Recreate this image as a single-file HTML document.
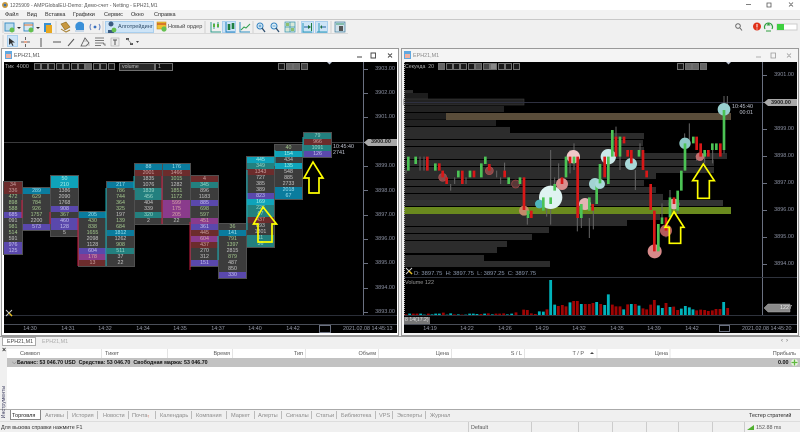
<!DOCTYPE html>
<html><head><meta charset="utf-8"><style>
html,body{margin:0;padding:0;width:800px;height:432px;overflow:hidden;background:#f0f0f0}
body{font-family:"Liberation Sans",sans-serif;font-size:5.5px;color:#2a2a2a;position:relative;filter:blur(.3px)}
.a{position:absolute;white-space:nowrap}
.t{position:absolute;white-space:nowrap;line-height:8px}
.c{position:absolute;width:27px;background:#3c3c3c;outline:1px solid #505050}
.c i{display:block;height:6px;font:normal 5.3px/6px "Liberation Sans",sans-serif;text-align:center;color:#c6c6c6}
.c i.g{color:#a5c98f}
.c i.b{background:#0a7c9e;color:#9fe0ee}
.c i.k{background:#0fa3ba;color:#a8f0e8}
.c i.p{background:#5a48ac;color:#c6c2ec}
.c i.r{background:#6c2c2c;color:#c9a0a0}
.c i.m{background:#8a3b8c;color:#d8a8a8}
.c i.e{background:#23807f;color:#9fd8c8}
.px{color:#8d93a5;font-size:5.5px;width:30px;text-align:right}
.tm{color:#9a9fae;font-size:5.4px;transform:translateX(-50%)}
.bt{position:absolute;width:5px;height:5px;border:1px solid #707070;background:#1a1a1a;top:63px}
.hd{top:350px;color:#555;font-size:5.5px}
.tb{top:412px;color:#8a8a8a;font-size:5.6px}
.hl{position:absolute;background:#cde4f7;border:1px solid #a9cfee;box-sizing:border-box}
</style></head><body>

<!-- title bar -->
<div class="a" style="left:0;top:0;width:800px;height:10px;background:#fff"></div>
<svg class="a" style="left:1px;top:0" width="8" height="10"><circle cx="4" cy="5" r="3" fill="#c89a40"/><circle cx="4" cy="5" r="1.3" fill="#3a70b0"/></svg>
<div class="t" style="left:10px;top:2px;color:#555;font-size:5.6px;transform:scaleX(.9);transform-origin:left">1225909 - AMPGlobalEU-Demo: Демо-счет - Netting - EPH21,M1</div>
<svg class="a" style="left:740px;top:0" width="60" height="10" fill="none" stroke="#555" stroke-width=".8"><path d="M6 4.5h5M27 3h4v4h-4zM49 2.5l4 4M53 2.5l-4 4"/></svg>

<!-- menu -->
<div class="a" style="left:0;top:10px;width:800px;height:9px;background:#f2f2f2"></div>
<div class="t" style="left:5px;top:11px">Файл</div><div class="t" style="left:27px;top:11px">Вид</div><div class="t" style="left:45px;top:11px">Вставка</div><div class="t" style="left:73px;top:11px">Графики</div><div class="t" style="left:104px;top:11px">Сервис</div><div class="t" style="left:131px;top:11px">Окно</div><div class="t" style="left:154px;top:11px">Справка</div>

<!-- toolbars -->
<div class="a" style="left:0;top:19px;width:800px;height:1px;background:#c8c8c8"></div>
<div class="a" style="left:0;top:20px;width:800px;height:28px;background:#f0f0f0"></div>
<div class="a" style="left:4px;top:33px;width:344px;height:1px;background:#d8d8d8"></div>
<div class="hl" style="left:105px;top:21px;width:49px;height:12px"></div>
<div class="hl" style="left:222px;top:21px;width:14px;height:12px"></div>
<div class="hl" style="left:301px;top:21px;width:13px;height:12px"></div>
<div class="hl" style="left:315px;top:21px;width:13px;height:12px"></div>
<div class="hl" style="left:7px;top:35px;width:11px;height:12px"></div>
<svg class="a" style="left:0;top:18px" width="360" height="32" fill="none">
<path d="M3 3v12M3 17v12M56 3v12M103 3v12M205 3v12M253 3v12M298 3v12M331 3v12" stroke="#d0d0d0"/>
<rect x="5" y="5" width="9" height="8" fill="#bcdcee" stroke="#3f8fc4"/><circle cx="12" cy="12" r="2.5" fill="#66c050"/><path d="M17 9h4l-2 2z" fill="#333"/>
<rect x="24" y="5" width="9" height="8" fill="#d8e8f2" stroke="#3f8fc4"/><path d="M24 7h9" stroke="#e07030"/><circle cx="31" cy="12" r="2.5" fill="#66c050"/><path d="M36 9h4l-2 2z" fill="#333"/>
<rect x="44" y="5" width="7" height="9" fill="#3a90d0"/><rect x="46" y="7" width="6" height="8" fill="#e8a820"/>
<path d="M61 6l5-2 4 5-5 3z" fill="#c89840" stroke="#8a6a20" stroke-width=".6"/><path d="M61 11l5 3 4-2" stroke="#a88030"/>
<path d="M76 11a4 4 0 0 1 8-5v7h-8z" fill="#3a90d8"/><path d="M75 13h9" stroke="#c8d8e8" stroke-width="2"/>
<circle cx="95" cy="9" r="1.4" fill="#3a70c0"/><path d="M91 6q-2 3 0 6M99 6q2 3 0 6" stroke="#6080c0"/>
<circle cx="111" cy="6" r="2.5" fill="#3a5a80"/><path d="M108 12h6v3h-6z" fill="#3a5a80"/><circle cx="114" cy="12" r="2.4" fill="#66c050"/>
<rect x="157" y="4" width="9" height="7" fill="#f0c030" stroke="#c09020" stroke-width=".6"/><path d="M157 6h9" stroke="#c03020"/><circle cx="164" cy="11" r="2.6" fill="#66c050"/>
<path d="M211 4v10h10M214 5v6M218 4v6" stroke="#2f9d8c"/><path d="M214 6v3M218 6v3" stroke="#55b040" stroke-width="2"/>
<path d="M226 4v10h9" stroke="#2080c0"/><path d="M229 6v6M233 5v6" stroke="#208040" stroke-width="2.6"/>
<path d="M240 4v10h10" stroke="#3090c0"/><path d="M241 12l3-3 2 1 4-4" stroke="#30a050"/>
<circle cx="260" cy="8" r="3" stroke="#3080c0" fill="#e0f0f8"/><path d="M262 10l3 4" stroke="#305070" stroke-width="1.3"/><path d="M258.5 8h3M260 6.500v3" stroke="#3080c0" stroke-width=".7"/>
<circle cx="274" cy="8" r="3" stroke="#3080c0" fill="#e0f0f8"/><path d="M276 10l3 4" stroke="#305070" stroke-width="1.3"/><path d="M272.500 8h3" stroke="#3080c0" stroke-width=".7"/>
<rect x="285" y="4" width="10" height="10" fill="#d8e8d8" stroke="#3090b0" stroke-width=".7"/><path d="M290 4v10M285 9h10" stroke="#3090b0" stroke-width=".7"/><rect x="286" y="5" width="3" height="3" fill="#8cc070"/><rect x="291" y="10" width="3" height="3" fill="#8cc070"/>
<path d="M303 5v9h9" stroke="#2c9ab8"/><path d="M304 9h5" stroke="#2060a0"/><path d="M308 7l3 2-3 2z" fill="#207040"/><path d="M311.500 5v8" stroke="#208040"/>
<path d="M319 5v9M317 14h10" stroke="#2c9ab8"/><path d="M321 9h5" stroke="#2060a0"/><path d="M322 7l-2 2 2 2z" fill="#207040"/>
<rect x="335" y="4" width="10" height="10" fill="#cfe0ea" stroke="#3a7a9a" stroke-width=".7"/><rect x="339" y="8" width="4" height="5" fill="#555"/><path d="M336 6h8" stroke="#3a9a70"/>
<path d="M9 20l0 7 2-2 1.500 3 1-.5-1.500-3h3z" fill="#333"/>
<path d="M21 24h9M25.500 19v3M25.500 26v3" stroke="#666"/><path d="M24 24h3" stroke="#e06030"/>
<path d="M41 20v9" stroke="#555"/><path d="M53 24h8" stroke="#555"/><path d="M68 28l6-7" stroke="#555"/>
<path d="M81 28l4-8 4 5-3 3z" stroke="#555" stroke-width=".8"/><path d="M84 23h4M86 27h4" stroke="#888" stroke-width=".6"/>
<path d="M95 20h9M95 22.500h9M95 25h9M95 27.500h6" stroke="#555" stroke-width=".8"/><path d="M103 26h2v2" stroke="#555" stroke-width=".7"/>
<rect x="111" y="20" width="8" height="8" fill="#ececec" stroke="#aaa" stroke-width=".6"/><path d="M113 22h4M115 22v5" stroke="#555"/>
<path d="M126 20h3v2h-3zM130 25h3v2h-3z" fill="#555"/><path d="M127 21l5 5" stroke="#888" stroke-width=".7"/><path d="M136 23h3l-1.500 2z" fill="#444"/>
</svg>
<div class="t" style="left:118px;top:23px;color:#2d4a66;font-size:5.5px">Алготрейдинг</div>
<div class="t" style="left:168px;top:23px;color:#444;font-size:5.6px">Новый ордер</div>
<svg class="a" style="left:730px;top:20px" width="70" height="14" fill="none">
<circle cx="8" cy="6" r="2.300" stroke="#666"/><path d="M10 8l2 2.500" stroke="#666"/>
<circle cx="27" cy="6.500" r="4" fill="#e03018"/><path d="M27 4v3.500M27 8.500v1" stroke="#fff"/>
<path d="M35 9a4 4 0 1 1 7 0" stroke="#30a040" stroke-width="1.200"/><path d="M38.500 3l2 2.500h-4z" fill="#30a040"/><path d="M36 11h5" stroke="#30a040"/>
<rect x="47" y="4" width="20" height="6" fill="#fff" stroke="#ccc"/><rect x="47" y="4" width="7" height="6" fill="#3ed040"/>
</svg>

<!-- window frames -->
<div class="a" style="left:0;top:48px;width:800px;height:288px;background:#f0f0f0"></div>
<div class="a" style="left:1px;top:48px;width:398px;height:288px;background:#fff;border:1px solid #999;box-sizing:border-box"></div>
<div class="a" style="left:401px;top:48px;width:398px;height:288px;background:#f4f4f4;border:1px solid #999;box-sizing:border-box"></div>
<svg class="a" style="left:5px;top:51px" width="8" height="9"><rect width="7" height="8" y="0" fill="#60a8e0"/><rect x="1" y="3" width="5" height="4" fill="#f0b0a0"/></svg>
<div class="t" style="left:14px;top:52px;color:#555;font-size:5.400px">EPH21,M1</div>
<svg class="a" style="left:404px;top:51px" width="8" height="9"><rect width="7" height="8" y="0" fill="#60a8e0"/><rect x="1" y="3" width="5" height="4" fill="#f0b0a0"/></svg>
<div class="t" style="left:413px;top:52px;color:#888;font-size:5.400px">EPH21,M1</div>
<svg class="a" style="left:350px;top:50px" width="50" height="11" fill="none" stroke="#444" stroke-width=".9"><path d="M7 7h5M21 3h4.500v5H21zM38 3.500l4 4M42 3.500l-4 4"/></svg>
<svg class="a" style="left:750px;top:50px" width="50" height="11" fill="none" stroke="#999" stroke-width=".8"><path d="M6 7h5M21 3h4.500v5H21zM37 3.500l4 4M41 3.500l-4 4"/></svg>

<!-- left chart -->
<div class="a" style="left:4px;top:62px;width:393px;height:271px;background:#000"></div>
<div class="a" style="left:363px;top:62px;width:1px;height:253px;background:#6a7080"></div>
<div class="a" style="left:4px;top:142px;width:360px;height:1px;background:#3a3a3c"></div>
<div class="a" style="left:4px;top:315px;width:393px;height:1px;background:#2a2e38"></div>
<div class="a" style="left:4px;top:324px;width:393px;height:1px;background:#4a4e58"></div>
<div class="a" style="left:319px;top:325px;width:10px;height:6px;border:1px solid #6a7080"></div>
<svg class="a" style="left:363px;top:62px" width="8" height="254" stroke="#6a7080" fill="none"><path d="M0 7.500h5M0 31.500h5M0 55.500h5M0 80.500h5M0 104.500h5M0 128.500h5M0 153.500h5M0 177.500h5M0 201.500h5M0 226.500h5M0 250.500h5" /></svg>
<div class="t px" style="left:365px;top:65px">3903.00</div><div class="t px" style="left:365px;top:89px">3902.00</div><div class="t px" style="left:365px;top:113px">3901.00</div><div class="t px" style="left:365px;top:162px">3899.00</div><div class="t px" style="left:365px;top:187px">3898.00</div><div class="t px" style="left:365px;top:211px">3897.00</div><div class="t px" style="left:365px;top:235px">3896.00</div><div class="t px" style="left:365px;top:259px">3895.00</div><div class="t px" style="left:365px;top:284px">3894.00</div><div class="t px" style="left:365px;top:308px">3893.00</div>
<svg class="a" style="left:364px;top:138px" width="34" height="9"><path d="M0 4.500L4 1h29v7H4z" fill="#a9a9a9"/></svg>
<div class="t" style="left:371px;top:138px;color:#222;font-size:5.500px;font-weight:bold">3900.00</div>

<div class="t" style="left:5px;top:63px;color:#b0b0b0;font-size:5.500px">Тик&nbsp; 4000</div>
<span class="bt" style="left:34px"></span><span class="bt" style="left:41px"></span><span class="bt" style="left:48px"></span><span class="bt" style="left:56px"></span><span class="bt" style="left:63px"></span><span class="bt" style="left:71px"></span><span class="bt" style="left:78px"></span><span class="bt" style="left:85px;background:#666"></span><span class="bt" style="left:93px"></span><span class="bt" style="left:100px"></span><span class="bt" style="left:108px"></span>
<div class="a" style="left:119px;top:63px;width:34px;height:6px;background:#2a2a2a;border:1px solid #707070;color:#bbb;font-size:5.200px;line-height:6px;text-indent:2px">volume</div>
<div class="a" style="left:155px;top:63px;width:16px;height:6px;background:#111;border:1px solid #707070;color:#bbb;font-size:5.200px;line-height:6px;text-indent:2px">1</div>
<span class="bt" style="left:278px"></span><span class="bt" style="left:286px;background:#666"></span><span class="bt" style="left:293px;background:#666"></span><span class="bt" style="left:301px;background:#444"></span>
<svg class="a" style="left:326px;top:61px" width="8" height="4"><path d="M1 1h5L3.500 3.500z" fill="#c0c8d8"/></svg>

<div class="c" style="left:4px;top:182px;width:18px"><i class="r">34</i><i class="r">336</i><i class="g">472</i><i class="g">898</i><i class="g">588</i><i class="p">685</i><i>091</i><i class="g">981</i><i class="g">514</i><i>591</i><i class="p">976</i><i class="p">125</i></div>
<div class="c" style="left:23px;top:188px"><i class="b">289</i><i class="g">629</i><i class="g">784</i><i class="g">926</i><i class="g">1757</i><i>2200</i><i class="p">573</i></div>
<div class="c" style="left:51px;top:176px"><i class="k">50</i><i class="k">210</i><i>1386</i><i>2090</i><i>1768</i><i class="p">908</i><i class="g">367</i><i class="p">460</i><i class="p">128</i><i>5</i></div>
<div class="c" style="left:79px;top:212px"><i class="b">205</i><i class="g">430</i><i class="g">838</i><i class="g">1655</i><i>2098</i><i>1128</i><i class="p">604</i><i class="m">178</i><i class="r">13</i></div>
<div class="c" style="left:107px;top:182px"><i class="b">217</i><i class="g">786</i><i class="g">744</i><i class="g">364</i><i class="g">325</i><i>197</i><i class="g">139</i><i class="g">684</i><i class="b">1812</i><i>1262</i><i class="g">908</i><i class="e">511</i><i>37</i><i>22</i></div>
<div class="c" style="left:135px;top:164px"><i class="b">88</i><i class="r">2001</i><i>1835</i><i>1076</i><i class="e">1839</i><i class="e">456</i><i>404</i><i>339</i><i class="e">320</i><i>2</i></div>
<div class="c" style="left:163px;top:164px"><i class="b">176</i><i class="r">1466</i><i class="g">1015</i><i>1282</i><i class="g">1851</i><i class="g">1172</i><i class="m">599</i><i class="m">175</i><i class="m">205</i><i>22</i></div>
<div class="c" style="left:191px;top:176px"><i class="r">4</i><i class="e">345</i><i>896</i><i>1183</i><i class="p">885</i><i class="g">698</i><i class="g">597</i><i class="m">451</i><i class="p">361</i><i class="r">445</i><i class="m">604</i><i class="r">437</i><i>270</i><i>312</i><i class="p">151</i></div>
<div class="c" style="left:219px;top:224px"><i class="g">36</i><i class="b">141</i><i class="g">791</i><i class="g">1397</i><i>2815</i><i class="g">879</i><i>487</i><i>850</i><i class="p">330</i></div>
<div class="c" style="left:247px;top:157px"><i class="k">445</i><i class="e">349</i><i class="r">1343</i><i>727</i><i>385</i><i>389</i><i class="p">823</i><i class="k">169</i><i class="e">226</i><i class="e">67</i><i class="r">437</i><i>893</i><i>1301</i><i class="e">11</i><i class="e">36</i></div>
<div class="c" style="left:275px;top:145px"><i class="g">40</i><i class="k">154</i><i>434</i><i class="k">135</i><i>548</i><i>885</i><i>2733</i><i class="b">2018</i><i class="b">67</i></div>
<div class="c" style="left:304px;top:133px"><i class="e">79</i><i class="r">966</i><i class="e">1091</i><i class="p">126</i></div>
<svg class="a" style="left:0;top:0" width="400" height="340" fill="none">
<path d="M22 200v18M50 212v12M78 218v48M162 176v48M190 222v48" stroke="#d01840"/>
<path d="M106 188v78M134 176v14M218 236v24M247 170v60M275 150v16M303 137v20" stroke="#10b0b8"/>
<path d="M263 207L253.500 224H258V242H272V224H276.500ZM313 162L304 178H309V193H319V178H323Z" stroke="#ffff00" stroke-width="1.700"/>
<path d="M6 310l6 6M12 310l-6 6" stroke="#ccc"/><path d="M9 313l3 3" stroke="#e8c020" stroke-width="1.400"/>
</svg>
<div class="t" style="left:333px;top:144px;color:#c0c4d0;font-size:5.400px;line-height:6px">10:45:40<br>2741</div>

<div class="t tm" style="left:30px;top:325px">14:30</div><div class="t tm" style="left:68px;top:325px">14:31</div><div class="t tm" style="left:105px;top:325px">14:32</div><div class="t tm" style="left:143px;top:325px">14:34</div><div class="t tm" style="left:180px;top:325px">14:35</div><div class="t tm" style="left:218px;top:325px">14:37</div><div class="t tm" style="left:255px;top:325px">14:40</div><div class="t tm" style="left:293px;top:325px">14:42</div>
<div class="t" style="left:343px;top:325px;color:#9a9fae;font-size:5.400px">2021.02.08 14:45:13</div>

<!-- right chart -->
<div class="a" style="left:404px;top:62px;width:393px;height:271px;background:#000"></div>
<svg class="a" style="left:400px;top:60px" width="400" height="280" fill="none" shape-rendering="auto">
<g transform="translate(0 -60)">
<g fill="#2c2c2c">
<rect x="4" y="90" width="9" height="3"/><rect x="4" y="93" width="24" height="6" fill="#1d1d1d"/>
<rect x="4" y="99" width="120" height="6" fill="#222" stroke="#3c3c3c" stroke-width=".6"/><rect x="4" y="106" width="100" height="6" fill="#222"/>
<rect x="4" y="113" width="42" height="6.500" fill="#1f1f1f"/><rect x="46" y="113" width="285" height="7" fill="#5a4d3a"/>
<rect x="4" y="120" width="92" height="6" fill="#222"/><rect x="4" y="127" width="106" height="6"/>
<rect x="4" y="133" width="240" height="6"/><rect x="4" y="140" width="239" height="6"/><rect x="4" y="147" width="240" height="6"/>
<rect x="4" y="153" width="323" height="6"/><rect x="4" y="160" width="310" height="6"/><rect x="4" y="167" width="310" height="6"/><rect x="4" y="173" width="252" height="6"/><rect x="4" y="180" width="240" height="6"/><rect x="4" y="187" width="252" height="6"/><rect x="4" y="194" width="259" height="6"/><rect x="4" y="200" width="319" height="6" fill="#333"/>
<rect x="4" y="207" width="327" height="7" fill="#6a8a1e"/>
<rect x="4" y="214" width="256" height="6"/><rect x="4" y="220" width="223" height="6"/><rect x="4" y="227" width="145" height="6"/><rect x="4" y="234" width="128" height="6"/><rect x="4" y="241" width="103" height="6"/><rect x="4" y="247" width="93" height="6"/><rect x="4" y="255" width="80" height="6"/><rect x="4" y="261" width="146" height="6"/>
</g>
<path d="M4 102.500h358" stroke="#2e3040"/>
<path d="M362.500 62v253" stroke="#6a7080"/>
<path d="M362 75.500h5M362 102.500h5M362 129.500h5M362 156.500h5M362 183.500h5M362 210.500h5M362 237.500h5M362 264.500h5" stroke="#6a7080"/>
<path d="M4.500 62v253" stroke="#aaa" stroke-dasharray="1 1"/>
<path d="M4 277.500h393M4 315.500h393" stroke="#2e323c"/><path d="M4 324.500h393" stroke="#4a4e58"/>
<path d="M362.500 278v37" stroke="#6a7080"/>
<g transform="translate(0 90) scale(.33333)">
<path d="M60 200v42M72 200v42M18 240v10M164 262v20M152 282v20M198 262v20M290 242v20M302 262v20M452 180v224M476 220v80M382 384v20M440 330v50M464 262v80M522 160v80M498 200v60M510 180v70M532 384v40M568 384v60M580 362v56M544 384v30" stroke="#666" stroke-width="3"/>
<path d="M268 222v10M314 218v24" stroke="#777" stroke-width="2.500"/>
</g>
<g transform="translate(200 90) scale(.33333)">
<path d="M48 110v30M60 200v40M106 240v60M120 160v20M175 484v10M186 340v42M198 422v20M210 300v22M233 362v10M268 100v60M254 130v30M290 200v12M314 200v20M338 180v40M372 18v42M372 180v10M382 18v30" stroke="#666" stroke-width="3"/>
</g>
<!-- bubbles -->
<g transform="translate(0 90) scale(.33333)">
<circle cx="452" cy="322" r="35" fill="#dff3f1"/>
<circle cx="520" cy="200" r="20" fill="#f0c8c8"/>
<circle cx="486" cy="282" r="18" fill="#d88e8e"/>
<circle cx="555" cy="342" r="18" fill="#e2b4b4"/>
<circle cx="372" cy="362" r="15" fill="#c58a6a"/>
<circle cx="418" cy="342" r="13" fill="#4fb5be"/>
<circle cx="585" cy="282" r="18" fill="#a2d2d2"/>
<circle cx="128" cy="262" r="12" fill="#8a4a4a" stroke="#b05050" stroke-width="2"/>
<circle cx="268" cy="242" r="12" fill="#8a4a4a" stroke="#b05050" stroke-width="2"/>
<circle cx="347" cy="282" r="12" fill="#5a3838" stroke="#a04848" stroke-width="2"/>
<path d="M25 200v42M47 200v22M106 220v22M175 242v20M210 242v20M244 220v42M256 200v22M326 262v20M360 262v20M384 362v22M430 322v40M452 322v20M464 282v20M498 200v62M522 200v20M544 342v42M568 322v40M590 282v60" stroke="#4cc355" stroke-width="8"/>
<path d="M82 200v42M118 220v22M128 242v20M140 262v20M187 242v40M222 242v20M268 222v20M314 242v20M372 262v98M394 362v22M486 262v20M510 200v20M533 200v184M578 342v20" stroke="#d81818" stroke-width="8"/>
</g>
<g transform="translate(200 90) scale(.33333)">
<circle cx="25" cy="200" r="23" fill="#cbe9e9"/>
<circle cx="93" cy="222" r="18" fill="#a9d9d9"/>
<circle cx="0" cy="282" r="15" fill="#a9d9d9"/>
<circle cx="164" cy="484" r="21" fill="#d88a8a"/>
<circle cx="198" cy="422" r="18" fill="#b45c5c"/>
<circle cx="222" cy="342" r="16" fill="#e0b8b8"/>
<circle cx="255" cy="160" r="17" fill="#8fc8c8"/>
<circle cx="300" cy="200" r="13" fill="#c07070"/>
<circle cx="372" cy="58" r="19" fill="#98d0d0"/>
<path d="M0 222v58M25 200v82M37 120v80M60 140v60M117 180v20M175 402v82M186 382v20M210 322v60M233 302v60M244 242v60M255 160v82M280 140v20M314 180v20M337 160v20M349 160v20M372 60v120" stroke="#4cc355" stroke-width="8"/>
<path d="M14 200v62M48 140v60M72 140v20M83 180v20M94 180v40M129 180v60M140 242v20M152 282v78M163 362v122M198 382v40M222 322v20M290 140v40M302 160v40M325 180v20M361 160v40" stroke="#d81818" stroke-width="8"/>
<path d="M222 365L195 412H208V460H242V412H252ZM310 222L278 272H293V325H328V272H343Z" stroke="#ffff00" stroke-width="5"/>
</g>
<!-- volume -->
<g transform="translate(0 265) scale(.33333)" stroke-width="8.500">
<path stroke="#00b3bb" d="M29 146V150M62 146V150M73 149V150M96 148V150M107 146V150M118 146V150M141 149V150M152 145V150M175 148V150M197 149V150M209 146V150M220 146V150M231 147V150M254 146V150M277 148V150M322 148V150M335 146V150M418 139V150M430 140V150M452 45V150M464 119V150M510 112V150M544 117V150M590 111V150M614 120V150M625 88V150M671 133V150M694 117V150M717 122V150M775 121V150M787 129V150M810 126V150M844 131V150M856 123V150M868 127V150M879 133V150M971 111V150"/>
<path stroke="#a00404" d="M18 148V150M40 146V150M51 146V150M85 146V150M130 143V150M163 148V150M186 149V150M243 147V150M265 145V150M288 146V150M299 146V150M311 145V150M348 142V150M371 134V150M382 135V150M394 145V150M406 147V150M441 133V150M475 123V150M487 120V150M498 124V150M521 108V150M532 108V150M556 117V150M568 117V150M579 114V150M602 117V150M637 119V150M648 124V150M660 124V150M683 118V150M706 117V150M729 130V150M740 133V150M752 119V150M763 105V150M798 114V150M821 125V150M833 135V150M890 136V150M902 134V150M914 135V150M925 138V150M937 136V150M948 132V150M960 132V150M983 129V150"/>
</g>
<path d="M364 102.500L368 99h29v7h-29z" fill="#a9a9a9"/>
<path d="M364 308l4-4h22v8h-22z" fill="#8a8a8a" stroke="#aaa" stroke-width=".5"/>
<path d="M6 268l6 6M12 268l-6 6" stroke="#ccc"/><path d="M9 271l3 3" stroke="#e8c020" stroke-width="1.400"/>
<rect x="319.500" y="325.500" width="10" height="6" stroke="#6a7080"/>
</g>
</svg>
<div class="t" style="left:771px;top:99px;color:#222;font-size:5.500px;font-weight:bold">3900.00</div>
<div class="t" style="left:780px;top:304px;color:#eee;font-size:5.400px">1227</div>
<div class="t px" style="left:764px;top:71px">3901.00</div><div class="t px" style="left:764px;top:125px">3899.00</div><div class="t px" style="left:764px;top:152px">3898.00</div><div class="t px" style="left:764px;top:179px">3897.00</div><div class="t px" style="left:764px;top:206px">3896.00</div><div class="t px" style="left:764px;top:233px">3895.00</div><div class="t px" style="left:764px;top:260px">3894.00</div>
<div class="t" style="left:732px;top:104px;color:#c0c4d0;font-size:5.400px;line-height:6px;text-align:right">10:45:40<br>00:01</div>
<div class="t" style="left:405px;top:63px;color:#b0b0b0;font-size:5.200px">Секунда&nbsp; 20</div>
<span class="bt" style="left:438px;background:#666"></span><span class="bt" style="left:446px"></span><span class="bt" style="left:453px"></span><span class="bt" style="left:460px"></span><span class="bt" style="left:468px"></span><span class="bt" style="left:475px;background:#555"></span><span class="bt" style="left:483px;background:#444"></span><span class="bt" style="left:490px;background:#888"></span><span class="bt" style="left:498px"></span><span class="bt" style="left:505px"></span><span class="bt" style="left:513px"></span>
<span class="bt" style="left:677px"></span><span class="bt" style="left:685px;background:#666"></span><span class="bt" style="left:692px;background:#666"></span><span class="bt" style="left:700px;background:#666"></span>
<svg class="a" style="left:725px;top:61px" width="8" height="4"><path d="M1 1h5L3.500 3.500z" fill="#c0c8d8"/></svg>
<div class="t" style="left:414px;top:270px;color:#8d9ab0;font-size:5.800px">D: 3897.75&nbsp; H: 3897.75&nbsp; L: 3897.25&nbsp; C: 3897.75</div>
<div class="t" style="left:405px;top:279px;color:#9a9a9a;font-size:5.500px">Volume 122</div>
<div class="a" style="left:404px;top:317px;width:26px;height:7px;background:#777;color:#ddd;font-size:5.200px;line-height:7px;text-indent:1px">8 14(17.2)</div>
<div class="t tm" style="left:430px;top:325px">14:19</div><div class="t tm" style="left:467px;top:325px">14:22</div><div class="t tm" style="left:505px;top:325px">14:26</div><div class="t tm" style="left:542px;top:325px">14:29</div><div class="t tm" style="left:579px;top:325px">14:32</div><div class="t tm" style="left:617px;top:325px">14:35</div><div class="t tm" style="left:654px;top:325px">14:39</div><div class="t tm" style="left:692px;top:325px">14:42</div>
<div class="t" style="left:742px;top:325px;color:#9a9fae;font-size:5.400px">2021.02.08 14:45:20</div>

<!-- bottom panel -->
<div class="a" style="left:0;top:336px;width:800px;height:96px;background:#f0f0f0;border-top:1px solid #999;box-sizing:border-box"></div>
<div class="a" style="left:2px;top:337px;width:34px;height:9px;background:#fff;border:1px solid #aaa;box-sizing:border-box"></div>
<div class="t" style="left:7px;top:338px;color:#444;font-size:5.400px">EPH21,M1</div>
<div class="t" style="left:42px;top:338px;color:#aaa;font-size:5.400px">EPH21,M1</div>
<div class="t" style="left:781px;top:337px;color:#666;font-size:6px;letter-spacing:3px">‹›</div>
<div class="a" style="left:7px;top:349px;width:793px;height:60px;background:#fff"></div>
<div class="a" style="left:7px;top:358px;width:793px;height:9px;background:#c2c2c2"></div>
<div class="t" style="left:2px;top:347px;color:#333;font-size:7px;font-weight:bold">×</div>
<div class="t hd" style="left:20px">Символ</div><div class="t hd" style="left:105px">Тикет</div><div class="t hd" style="right:570px">Время</div><div class="t hd" style="right:497px">Тип</div><div class="t hd" style="right:424px">Объем</div><div class="t hd" style="right:351px">Цена</div><div class="t hd" style="right:278px">S / L</div><div class="t hd" style="right:216px">T / P</div><div class="t hd" style="right:132px">Цена</div><div class="t hd" style="right:4px">Прибыль</div>
<svg class="a" style="left:0;top:349px" width="800" height="9" stroke="#e4e4e4"><path d="M101.500 0v9M167.500 0v9M232.500 0v9M305.500 0v9M378.500 0v9M451.500 0v9M524.500 0v9M597 0v9M670 0v9"/><path d="M590 5h4l-2-2z" fill="#444" stroke="none"/></svg>
<div class="t" style="left:12px;top:359px;color:#666;font-size:6px">⌵</div>
<div class="t" style="left:17px;top:359px;color:#111;font-size:5.300px;font-weight:bold">Баланс: 53 046.70 USD&nbsp; Средства: 53 046.70&nbsp; Свободная маржа: 53 046.70</div>
<div class="t" style="left:778px;top:359px;color:#111;font-size:5.400px;font-weight:bold">0.00</div>
<svg class="a" style="left:790px;top:358px" width="9" height="9"><circle cx="4.500" cy="4.500" r="3.500" fill="#e8f4e0"/><path d="M4.500 1.500v6M1.500 4.500h6" stroke="#60b840" stroke-width="1.300"/></svg>
<div class="a" style="left:0;top:409px;width:800px;height:1px;background:#aaa"></div>
<div class="a" style="left:10px;top:410px;width:31px;height:10px;background:#fff;border:1px solid #888;border-top:none;box-sizing:border-box"></div>
<div class="t" style="left:12px;top:412px;color:#222;font-size:5.600px">Торговля</div>
<div class="t tb" style="left:45px">Активы</div><div class="t tb" style="left:72px">История</div><div class="t tb" style="left:103px">Новости</div><div class="t tb" style="left:132px">Почта<span style="color:#d04020;font-size:5px">₇</span></div><div class="t tb" style="left:160px">Календарь</div><div class="t tb" style="left:196px">Компания</div><div class="t tb" style="left:231px">Маркет</div><div class="t tb" style="left:258px">Алерты</div><div class="t tb" style="left:286px">Сигналы</div><div class="t tb" style="left:316px">Статьи</div><div class="t tb" style="left:341px">Библиотека</div><div class="t tb" style="left:379px">VPS</div><div class="t tb" style="left:397px">Эксперты</div><div class="t tb" style="left:430px">Журнал</div>
<svg class="a" style="left:0;top:411px" width="440" height="8" stroke="#bbb"><path d="M67.500 0v8M97.500 0v8M128.500 0v8M155.500 0v8M191.500 0v8M226.500 0v8M254.500 0v8M281.500 0v8M311.500 0v8M336.500 0v8M375.500 0v8M392.500 0v8M425.500 0v8"/></svg>
<div class="t" style="left:749px;top:412px;color:#222;font-size:5.300px">Тестер стратегий</div>
<div class="a" style="left:-13px;top:398px;width:34px;height:8px;line-height:8px;color:#446;font-size:5.200px;transform:rotate(-90deg);text-align:center">Инструменты</div>
<div class="a" style="left:0;top:421px;width:800px;height:1px;background:#ddd"></div>
<div class="t" style="left:1px;top:424px;color:#333;font-size:5.400px">Для вызова справки нажмите F1</div>
<div class="t" style="left:471px;top:424px;color:#555;font-size:5.400px">Default</div>
<svg class="a" style="left:460px;top:422px" width="340" height="10" stroke="#ccc"><path d="M8.500 0v10M71.500 0v10M118.500 0v10M152.500 0v10M186.500 0v10M218.500 0v10M252.500 0v10M284.500 0v10"/><path d="M287 8l7-5v5z" fill="#50b030" stroke="none"/></svg>
<div class="t" style="left:756px;top:424px;color:#555;font-size:5.400px">152.88 ms</div>
</body></html>
